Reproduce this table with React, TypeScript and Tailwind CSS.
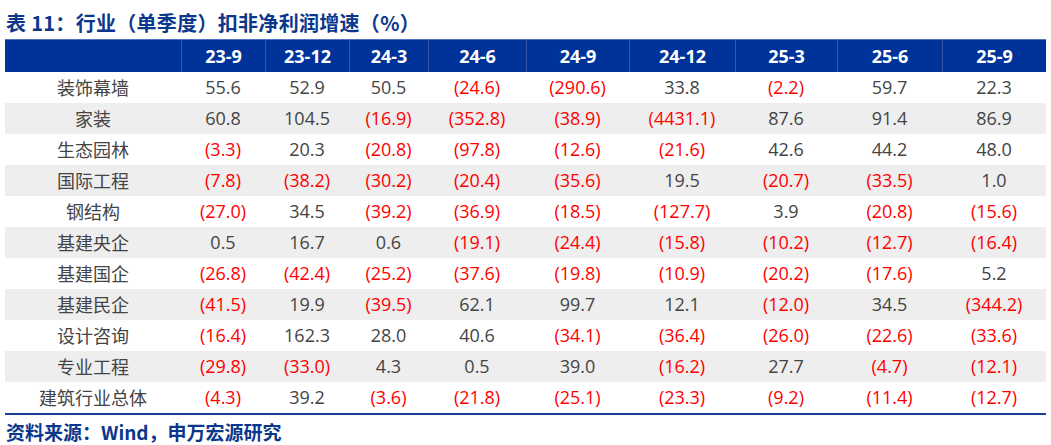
const cols = ["23-9", "23-12", "24-3", "24-6", "24-9", "24-12", "25-3", "25-6", "25-9"];

const rows: [string, string[]][] = [
  ["装饰幕墙", ["55.6", "52.9", "50.5", "(24.6)", "(290.6)", "33.8", "(2.2)", "59.7", "22.3"]],
  ["家装", ["60.8", "104.5", "(16.9)", "(352.8)", "(38.9)", "(4431.1)", "87.6", "91.4", "86.9"]],
  ["生态园林", ["(3.3)", "20.3", "(20.8)", "(97.8)", "(12.6)", "(21.6)", "42.6", "44.2", "48.0"]],
  ["国际工程", ["(7.8)", "(38.2)", "(30.2)", "(20.4)", "(35.6)", "19.5", "(20.7)", "(33.5)", "1.0"]],
  ["钢结构", ["(27.0)", "34.5", "(39.2)", "(36.9)", "(18.5)", "(127.7)", "3.9", "(20.8)", "(15.6)"]],
  ["基建央企", ["0.5", "16.7", "0.6", "(19.1)", "(24.4)", "(15.8)", "(10.2)", "(12.7)", "(16.4)"]],
  ["基建国企", ["(26.8)", "(42.4)", "(25.2)", "(37.6)", "(19.8)", "(10.9)", "(20.2)", "(17.6)", "5.2"]],
  ["基建民企", ["(41.5)", "19.9", "(39.5)", "62.1", "99.7", "12.1", "(12.0)", "34.5", "(344.2)"]],
  ["设计咨询", ["(16.4)", "162.3", "28.0", "40.6", "(34.1)", "(36.4)", "(26.0)", "(22.6)", "(33.6)"]],
  ["专业工程", ["(29.8)", "(33.0)", "4.3", "0.5", "39.0", "(16.2)", "27.7", "(4.7)", "(12.1)"]],
  ["建筑行业总体", ["(4.3)", "39.2", "(3.6)", "(21.8)", "(25.1)", "(23.3)", "(9.2)", "(11.4)", "(12.7)"]],
];

const grid = "grid grid-cols-[176px_84px_84px_79px_98px_103px_106px_102px_105px_104px]";
const cjk = '"Noto Sans CJK SC", sans-serif';

function App() {
  return (
    <div
      className="w-[1051px] h-[445px] bg-white pl-[5px] pt-[9px]"
      style={{ fontFamily: '"Open Sans", "Noto Sans CJK SC", sans-serif' }}
    >
      <h1
        className="h-[30px] pl-[1px] text-[20px] leading-[28px] tracking-[0.3px] font-bold text-[#0b378c]"
        style={{ fontFamily: cjk }}
      >
        表 11：行业（单季度）扣非净利润增速（%）
      </h1>

      <div className="w-[1041px]">
        <div className={`${grid} h-[33px] bg-[#003399] border-t border-[#4f6fbf]`}>
          <div />
          {cols.map((c) => (
            <div
              key={c}
              className="flex items-center justify-center border-l border-[#3657a8] text-white font-bold text-[18px]"
            >
              {c}
            </div>
          ))}
        </div>

        {rows.map(([name, vals], i) => (
          <div
            key={name}
            className={`${grid} h-[31px] text-[18px] ${i % 2 === 1 ? "bg-[#eeeeee]" : "bg-white"}`}
          >
            <div className="flex items-center justify-center text-[#444444]" style={{ fontFamily: cjk }}>
              {name}
            </div>
            {vals.map((v, j) => (
              <div
                key={j}
                className={`flex items-center justify-center ${v.startsWith("(") ? "text-[#ff0000]" : "text-[#444444]"}`}
              >
                {v}
              </div>
            ))}
          </div>
        ))}

        <div className="h-[2px] bg-[#1c3f94]" />
      </div>

      <div
        className="mt-[5px] pl-[1px] text-[19px] leading-[24px] font-bold text-[#0b378c]"
        style={{ fontFamily: cjk }}
      >
        资料来源：Wind，申万宏源研究
      </div>
    </div>
  );
}

export default App;
